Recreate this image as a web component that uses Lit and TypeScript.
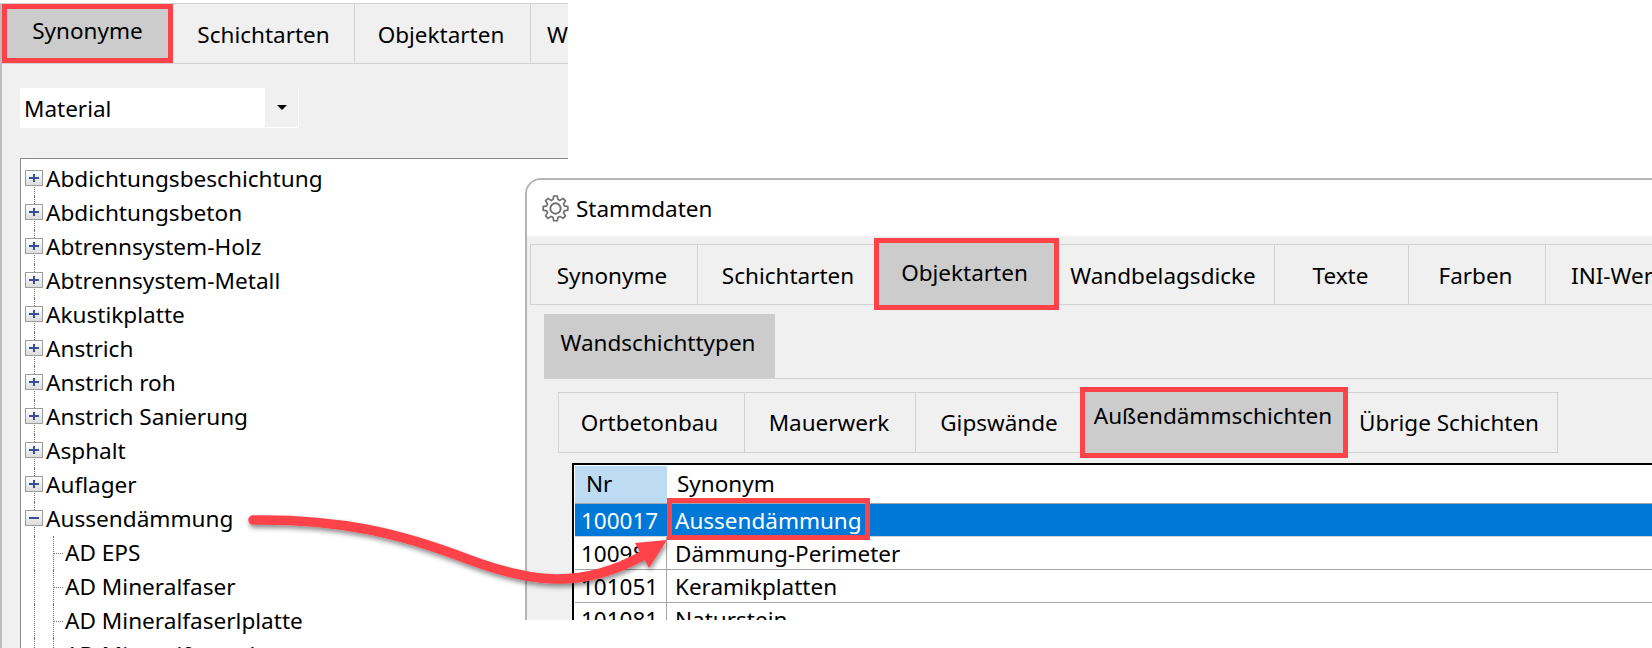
import { LitElement, html, css, svg } from "lit";
import { customElement } from "lit/decorators.js";

const gear = svg`<path d="M11.3 1.5h3.4l.7 3.4 1.9.8 2.9-1.9 2.4 2.4-1.9 2.9.8 1.9 3.4.7v3.4l-3.4.7-.8 1.9 1.9 2.9-2.4 2.4-2.9-1.9-1.9.8-.7 3.4h-3.4l-.7-3.4-1.9-.8-2.9 1.9-2.4-2.4 1.9-2.9-.8-1.9-3.4-.7v-3.4l3.4-.7.8-1.9-1.9-2.9 2.4-2.4 2.9 1.9 1.9-.8z" fill="none" stroke="#6e6e6e" stroke-width="1.6" stroke-linejoin="round"/><circle cx="13" cy="13.5" r="5" fill="none" stroke="#6e6e6e" stroke-width="1.8"/>`;

@customElement("app-root")
export class AppRoot extends LitElement {
  static styles = css`
    :host { display: block; width: 1652px; height: 648px; position: relative; overflow: hidden; background: #fff;
      font-family: "Noto Sans", "Open Sans", sans-serif; color: #000; }
    .panel { width: 568px; height: 645px; margin-top: 3px; border-top: 1px solid #cfcfcf; border-left: 2px solid #bdbdbd; background: #f0f0f0; box-sizing: border-box; overflow: hidden; }
    .strip { display: flex; box-sizing: border-box; border-bottom: 1px solid #d2d2d2; font-size: 22.5px; }
    .tab { display: flex; align-items: center; justify-content: center; box-sizing: border-box; border-right: 1px solid #d2d2d2; white-space: nowrap; flex: none; overflow: hidden; }
    .tab.on { background: #ccc; padding-bottom: 6px; }
    .red { border: 5px solid #fd4349; }
    .ostrip { height: 60px; }
    .ostrip .tab:not(.on) { padding-top: 2px; }
    .ostrip .t1 { width: 171px; }
    .ostrip .t2 { width: 182px; }
    .ostrip .t3 { width: 176px; padding-right: 3px; }
    .ostrip .t4 { width: 37px; justify-content: flex-start; padding-left: 16px; padding-right: 0; border-right: 0; }
    .combo { display: flex; width: 279px; height: 40px; margin: 24px 0 0 18px; background: #fff; font-size: 22.5px; box-sizing: border-box; border-right: 1px solid #fff; border-bottom: 1px solid #fff; }
    .combo span { flex: 1; padding-left: 4px; line-height: 42px; }
    .combo i { width: 33px; background: #f0f0f0; display: flex; align-items: center; justify-content: center; }
    .combo i::before { content: ""; border: 5px solid transparent; border-top: 5px solid #000; border-bottom: 0; }
    .tree { margin: 30px 0 0 18px; height: 500px; background: #fff; border: 1px solid #8a8a92; border-right: 0; padding-top: 3px; font-size: 22.6px; box-sizing: border-box; }
    .row { position: relative; height: 34px; box-sizing: border-box; display: flex; align-items: center; white-space: nowrap; padding-left: 4px; padding-bottom: 2px; }
    .row::before { content: ""; position: absolute; left: 13px; top: 0; bottom: 0; border-left: 1px dotted #777; }
    .row:first-child::before { top: 50%; }
    .exp { position: relative; width: 18px; height: 16px; box-sizing: border-box; border: 1px solid #9c9c9c; background: linear-gradient(#fff, #dcdcdc); margin-right: 3px; flex: none; }
    .exp::before { content: ""; position: absolute; left: 3px; right: 3px; top: 6px; height: 2px; background: #3a4f9c; }
    .exp.plus::after { content: ""; position: absolute; top: 3px; bottom: 3px; left: 7px; width: 2px; background: #3a4f9c; }
    .child { padding-left: 44px; }
    .child::after { content: ""; position: absolute; left: 32px; top: 0; bottom: 0; width: 10px; border-left: 1px dotted #777; background: linear-gradient(to right, #777 50%, transparent 50%) 0 50% / 2px 1px repeat-x; }

    .win { position: absolute; left: 525px; top: 178px; width: 1127px; height: 442px; box-sizing: border-box; border: 2px solid #b4b4b4; border-width: 2px 0 0 2px; border-top-left-radius: 16px; background: #f0f0f0; overflow: hidden; }
    .title { height: 56px; background: #fff; display: flex; align-items: center; gap: 7px; padding-left: 15px; font-size: 22.5px; box-sizing: border-box; }
    .title svg { width: 27px; height: 29px; flex: none; }
    .mstrip { height: 61px; margin: 8px 0 0 3px; border-top: 1px solid #d2d2d2; border-left: 1px solid #d2d2d2; }
    .mstrip .tab { padding-top: 2px; }
    .mstrip .tab.red { outline: 5px solid #fd4349; border: 0; position: relative; margin: -2px 0 -1px; padding: 0 4px 4px 0; }
    .m1 { width: 167px; padding-right: 4px; } .m2 { width: 181px; } .m3 { width: 175px; } .m4 { width: 221px; padding-right: 2px; } .m5 { width: 134px; padding-right: 2px; } .m6 { width: 137px; padding-right: 3px; }
    .m7 { width: 120px; justify-content: flex-start; padding-left: 25px; border-right: 0; }
    .wst { margin: 9px 0 0 17px; height: 64px; width: 231px; padding: 0 3px 8px 0; box-sizing: border-box; background: #ccc; display: flex; align-items: center; justify-content: center; font-size: 22.5px; }
    .rule { height: 1px; background: #d2d2d2; margin-left: 17px; }
    .sstrip { height: 61px; width: 1001px; margin: 13px 0 0 31px; border-top: 1px solid #d2d2d2; border-left: 1px solid #d2d2d2; }
    .s1 { width: 186px; padding-right: 4px; } .s2 { width: 171px; padding-right: 2px; } .s3 { width: 169px; padding-right: 2px; } .s4 { width: 258px; padding-right: 2px; } .s5 { width: 215px; padding-right: 2px; }
    .sstrip .tab.red { outline: 5px solid #fd4349; border: 0; position: relative; margin: -1px 0 -1px; padding-bottom: 14px; }
    .table { margin: 10px 0 0 45px; height: 180px; border: 1px solid #000; border-width: 2px 0 0 2px; background: #fff; padding: 1px 0 0 1px; font-size: 22.5px; }
    .tr { display: flex; height: 33px; box-sizing: border-box; border-bottom: 1px solid #a5a5a5; }
    .tr.th { height: 38px; }
    .td1 { width: 92px; box-sizing: border-box; padding-left: 6px; flex: none; border-right: 1px solid #a5a5a5; line-height: 34px; }
    .td2 { flex: 1; padding-left: 8px; line-height: 34px; }
    .th .td1 { background: #bddcf3; padding-left: 11px; border: 0; line-height: 36px; }
    .th .td2 { padding-left: 10px; line-height: 36px; }
    .sel { background: #0078d7; color: #fff; border-bottom-color: #d0d0d0; }
    .sel .td1 { border-right: 0; }
    .mark { position: absolute; left: 667px; top: 498px; width: 203px; height: 42px; box-sizing: border-box; border: 5px solid #fd4349; }
    .arrow { position: absolute; left: 0; top: 0; width: 1652px; height: 648px; pointer-events: none; }
  `;

  render() {
    const items = ["Abdichtungsbeschichtung","Abdichtungsbeton","Abtrennsystem-Holz","Abtrennsystem-Metall","Akustikplatte","Anstrich","Anstrich roh","Anstrich Sanierung","Asphalt","Auflager"];
    const kids = ["AD EPS","AD Mineralfaser","AD Mineralfaserlplatte","AD Mineralfaserplatte"];
    return html`
      <div class="panel">
        <div class="strip ostrip">
          <div class="tab on red t1">Synonyme</div>
          <div class="tab t2">Schichtarten</div>
          <div class="tab t3">Objektarten</div>
          <div class="tab t4">Wandbelagsdicke</div>
        </div>
        <div class="combo"><span>Material</span><i></i></div>
        <div class="tree">
          ${items.map(t => html`<div class="row"><b class="exp plus"></b>${t}</div>`)}
          <div class="row"><b class="exp"></b>Aussendämmung</div>
          ${kids.map(t => html`<div class="row child">${t}</div>`)}
        </div>
      </div>
      <div class="win">
        <div class="title"><svg viewBox="0 0 26 27">${gear}</svg>Stammdaten</div>
        <div class="strip mstrip">
          <div class="tab m1">Synonyme</div>
          <div class="tab m2">Schichtarten</div>
          <div class="tab on red m3">Objektarten</div>
          <div class="tab m4">Wandbelagsdicke</div>
          <div class="tab m5">Texte</div>
          <div class="tab m6">Farben</div>
          <div class="tab m7">INI-Werte</div>
        </div>
        <div class="wst">Wandschichttypen</div>
        <div class="rule"></div>
        <div class="strip sstrip">
          <div class="tab s1">Ortbetonbau</div>
          <div class="tab s2">Mauerwerk</div>
          <div class="tab s3">Gipswände</div>
          <div class="tab on red s4">Außendämmschichten</div>
          <div class="tab s5">Übrige Schichten</div>
        </div>
        <div class="table">
          <div class="tr th"><div class="td1">Nr</div><div class="td2">Synonym</div></div>
          <div class="tr sel"><div class="td1">100017</div><div class="td2">Aussendämmung</div></div>
          <div class="tr"><div class="td1">100987</div><div class="td2">Dämmung-Perimeter</div></div>
          <div class="tr"><div class="td1">101051</div><div class="td2">Keramikplatten</div></div>
          <div class="tr"><div class="td1">101081</div><div class="td2">Naturstein</div></div>
        </div>
      </div>
      <div class="mark"></div>
      <svg class="arrow" viewBox="0 0 1652 648">
        <defs><filter id="s" x="-5%" y="-20%" width="110%" height="150%"><feDropShadow dx="1" dy="3" stdDeviation="2.5" flood-color="#000" flood-opacity=".45"/></filter></defs>
        <g filter="url(#s)" fill="#fd4349">
          <path d="M253 520 C340 519 400 533 470 560 C530 582 580 590 642 556" fill="none" stroke="#fd4349" stroke-width="9.5" stroke-linecap="round"/>
          <path d="M667 540 L635 543 L649 568 Z"/>
        </g>
      </svg>
    `;
  }
}
